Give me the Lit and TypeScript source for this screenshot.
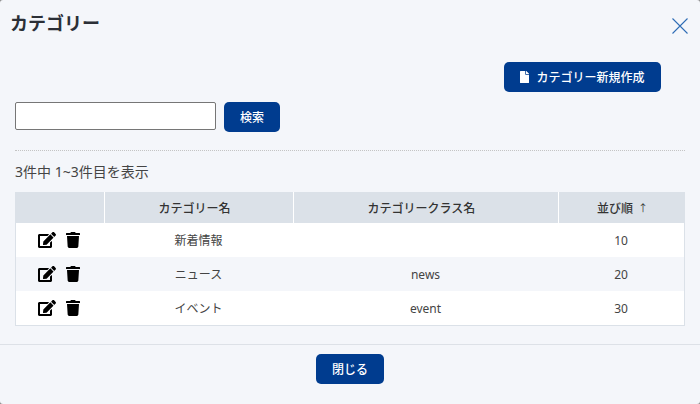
import { LitElement, html, css, svg } from "lit";
import { customElement } from "lit/decorators.js";

const editIcon = svg`<path d="M402.6 83.2l90.2 90.2c3.8 3.8 3.8 10 0 13.8L274.4 405.6l-92.8 10.3c-12.4 1.4-22.9-9.1-21.5-21.5l10.3-92.8L388.8 83.2c3.8-3.8 10-3.8 13.8 0zm162-22.9l-48.8-48.8c-15.2-15.2-39.9-15.2-55.2 0l-35.4 35.4c-3.8 3.8-3.8 10 0 13.8l90.2 90.2c3.8 3.8 10 3.8 13.8 0l35.4-35.4c15.2-15.3 15.2-40 0-55.2zM384 346.2V448H64V128h229.8c3.2 0 6.2-1.3 8.5-3.5l40-40c7.6-7.6 2.2-20.5-8.5-20.5H48C21.5 64 0 85.5 0 112v352c0 26.5 21.5 48 48 48h352c26.5 0 48-21.5 48-48V306.2c0-10.7-12.9-16-20.5-8.5l-40 40c-2.2 2.3-3.5 5.3-3.5 8.5z"/>`;
const trashIcon = svg`<path d="M432 32H312l-9.4-18.7A24 24 0 0 0 281.1 0H166.8a23.72 23.72 0 0 0-21.4 13.3L136 32H16A16 16 0 0 0 0 48v32a16 16 0 0 0 16 16h416a16 16 0 0 0 16-16V48a16 16 0 0 0-16-16zM53.2 467a48 48 0 0 0 47.9 45h245.8a48 48 0 0 0 47.9-45L416 128H32z"/>`;
const fileIcon = svg`<path d="M224 136V0H24C10.7 0 0 10.7 0 24v464c0 13.3 10.7 24 24 24h336c13.3 0 24-10.7 24-24V160H248c-13.2 0-24-10.8-24-24zm160-14.1v6.1H256V0h6.1c6.4 0 12.5 2.5 17 7l97.9 98c4.5 4.5 7 10.6 7 16.9z"/>`;

const rows = [
  { name: "新着情報", cls: "", order: 10 },
  { name: "ニュース", cls: "news", order: 20 },
  { name: "イベント", cls: "event", order: 30 },
];

@customElement("app-root")
export class AppRoot extends LitElement {
  static styles = css`
    :host {
      display: block;
      width: 700px;
      height: 404px;
      background: #8a8a8a;
      color: #333;
      font-family: "Noto Sans", "Noto Sans CJK JP", sans-serif;
      font-size: 12px;
      overflow: hidden;
    }
    .modal {
      height: 404px;
      background: #f4f6fa;
      border-radius: 3px;
      overflow: hidden;
    }
    .head {
      display: flex;
      justify-content: space-between;
      align-items: flex-start;
      height: 62px;
      padding: 11px 12px 0 10px;
      box-sizing: border-box;
    }
    h1 {
      margin: 0;
      font-size: 18px;
      line-height: 24px;
      font-weight: 700;
      color: #2b2f36;
    }
    .close {
      display: block;
      margin-top: 7px;
    }
    .body {
      padding: 0 15px;
    }
    .new-row {
      display: flex;
      justify-content: flex-end;
      padding-right: 24px;
      height: 40px;
    }
    .btn {
      display: inline-flex;
      align-items: center;
      justify-content: center;
      gap: 7px;
      height: 30px;
      box-sizing: border-box;
      border: none;
      border-radius: 5px;
      background: #003c8f;
      color: #fff;
      font: inherit;
      font-size: 12px;
      font-weight: 500;
      padding: 0;
    }
    .btn-new { width: 157px; }
    .btn-search { width: 56px; }
    .btn-close { width: 68px; }
    .search {
      display: flex;
      align-items: flex-start;
      gap: 8px;
      padding-bottom: 18px;
      border-bottom: 1px dotted #c4c4c4;
    }
    input {
      width: 201px;
      height: 28px;
      box-sizing: border-box;
      border: 1px solid #767676;
      border-radius: 2px;
      background: #fff;
      margin: 0;
      padding: 0;
    }
    .count {
      font-size: 14px;
      line-height: 20px;
      margin-top: 11px;
      margin-bottom: 10px;
      color: #444;
    }
    .table {
      display: grid;
      grid-template-columns: 88px 189px 265px 126px;
      width: 670px;
      box-sizing: border-box;
      border-right: 1px solid #dbe1e8;
      border-bottom: 1px solid #dbe1e8;
      border-left: 1px solid #dbe1e8;
    }
    .th {
      display: flex;
      align-items: center;
      justify-content: center;
      gap: 5px;
      height: 31px;
      box-sizing: border-box;
      padding-right: 9px;
      background: #dbe1e8;
      border-left: 1px solid #fff;
      font-weight: 500;
      color: #333;
    }
    .th.first { border-left: none; padding-right: 0; }
    .th.sorted { padding: 0 0 0 2px; }
    .arrow { font-size: 10px; font-weight: 400; }
    .td {
      display: flex;
      align-items: center;
      justify-content: center;
      height: 34px;
      background: #fff;
      color: #444;
    }
    .td.even { background: #f4f6fa; }
    .td.icons {
      gap: 10px;
      box-sizing: border-box;
      padding-right: 2px;
    }
    .icons svg { display: block; }
    .foot {
      display: flex;
      justify-content: center;
      margin-top: 18px;
      padding-top: 9px;
      border-top: 1px solid #dde1e7;
    }
  `;

  render() {
    return html`
      <div class="modal">
        <div class="head">
          <h1>カテゴリー</h1>
          <svg class="close" width="16" height="16" viewBox="0 0 16 16" fill="none" stroke="#2f6db5" stroke-width="1.1">
            <path d="M0.5 0.5L15.5 15.5M15.5 0.5L0.5 15.5" />
          </svg>
        </div>
        <div class="body">
          <div class="new-row">
            <button class="btn btn-new">
              <svg width="9" height="12" viewBox="0 0 384 512" fill="#fff">${fileIcon}</svg>
              カテゴリー新規作成
            </button>
          </div>
          <div class="search">
            <input type="text" />
            <button class="btn btn-search">検索</button>
          </div>
          <div class="count">3件中 1~3件目を表示</div>
          <div class="table">
            <div class="th first"></div>
            <div class="th">カテゴリー名</div>
            <div class="th">カテゴリークラス名</div>
            <div class="th sorted">並び順 <span class="arrow">↑</span></div>
            ${rows.map((r, i) => {
              const c = i % 2 === 1 ? "even" : "";
              return html`
                <div class="td icons ${c}">
                  <svg width="18" height="16" viewBox="0 0 576 512" fill="#000">${editIcon}</svg>
                  <svg width="14" height="16" viewBox="0 0 448 512" fill="#000">${trashIcon}</svg>
                </div>
                <div class="td ${c}">${r.name}</div>
                <div class="td ${c}">${r.cls}</div>
                <div class="td ${c}">${r.order}</div>
              `;
            })}
          </div>
        </div>
        <div class="foot">
          <button class="btn btn-close">閉じる</button>
        </div>
      </div>
    `;
  }
}
